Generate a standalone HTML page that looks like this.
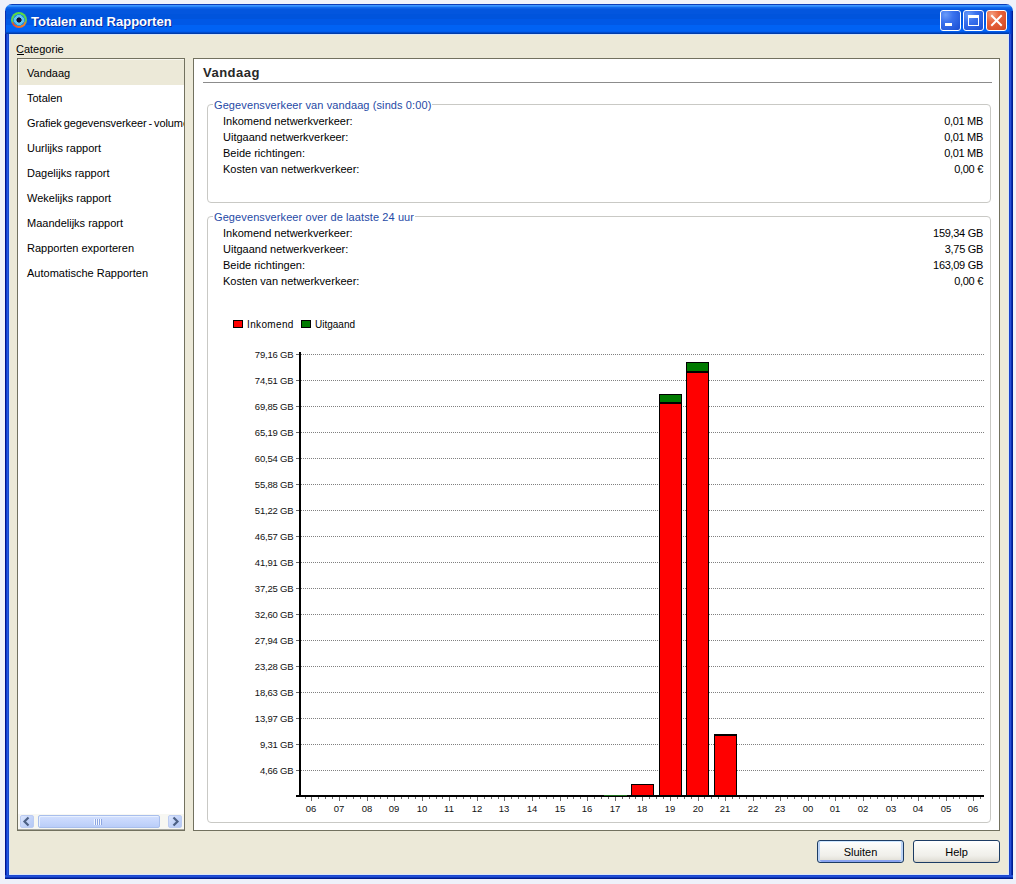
<!DOCTYPE html>
<html><head><meta charset="utf-8">
<style>
*{margin:0;padding:0;box-sizing:border-box}
html,body{width:1016px;height:884px;overflow:hidden;background:#EEF1FA;font-family:"Liberation Sans",sans-serif;font-size:11px;color:#000}
.a{position:absolute}
.t{position:absolute;white-space:nowrap;line-height:13px;height:13px}
#title{left:5px;top:4px;width:1008px;height:30px;border-radius:7px 7px 0 0;
 background:linear-gradient(to bottom,#0A3DB8 0 1px,#3D95FF 1px 2px,#2A86F8 2px 3px,#1068EC 3px 4px,#0A5EE6 4px 5px,#0356DE 5px 10px,#0054DC 10px 15px,#0058E6 15px 21px,#0062F4 21px 27px,#005CEE 27px 28px,#004CCC 28px 29px,#003CAA 29px 30px)}
#lbord{left:5px;top:34px;width:4px;height:845px;background:linear-gradient(to right,#00138C 0 1px,#0B3BD0 1px 2px,#2659E0 2px 3px,#1847C8 3px 4px)}
#rbord{left:1009px;top:34px;width:4px;height:845px;background:linear-gradient(to right,#1A40C8 0 1px,#2A50D8 1px 2px,#0A30B0 2px 3px,#001A90 3px 4px)}
#bbord{left:5px;top:875px;width:1008px;height:4px;background:linear-gradient(to bottom,#1C48D0 0 1px,#2450D8 1px 2px,#0A38B8 2px 3px,#001A8C 3px 4px)}
#client{left:9px;top:34px;width:1000px;height:841px;background:#ECE9D8;border:1px solid #D8E6F8}
.tbtn{position:absolute;top:10px;width:21px;height:21px;border:1px solid #fff;border-radius:3px;
 background:radial-gradient(circle at 25% 20%,#6A9CF8 0,#3B72EE 35%,#2358DA 80%,#1E4FD0 100%)}
.tbtn.cl{background:radial-gradient(circle at 25% 20%,#F4A080 0,#E8643C 35%,#D8502A 80%,#C8401E 100%)}
.lb{background:#fff;border:1px solid #72715F}
.item{position:absolute;left:9px;white-space:nowrap;line-height:13px}
.gb{position:absolute;border:1px solid #C9C9C5;border-radius:4px}
.gt{position:absolute;background:#fff;color:#1F4AA6;white-space:nowrap;line-height:13px;padding:0 1px;letter-spacing:0.1px}
.grid{position:absolute;left:301px;width:683px;height:1px;background:repeating-linear-gradient(to right,#7a7a7a 0 1px,transparent 1px 2px)}
.yl{position:absolute;font-size:9.5px;letter-spacing:-0.2px;line-height:11px;width:60px;text-align:right;left:233.4px;white-space:nowrap;color:#111}
.xl{position:absolute;font-size:9.5px;line-height:11px;width:20px;text-align:center;white-space:nowrap;color:#111;top:803px}
.btn{position:absolute;top:840px;width:87px;height:23px;border:1px solid #1C3C64;border-radius:3px;
 background:linear-gradient(to bottom,#FFFFFF 0%,#F8F8F4 30%,#F0EFEA 70%,#E4E2DA 90%,#D6D2C6 100%);text-align:center;line-height:23px}
.btn.def{box-shadow:inset 0 1px 0 #CEE7FF,inset 2px 0 0 #BCD4F6,inset -2px 0 0 #BCD4F6,inset 0 -2px 0 #8AA4F0}
</style></head><body>
<div id="title" class="a"></div>
<div class="a" style="left:5px;top:11px;width:1px;height:23px;background:#0A2FB0"></div>
<div class="a" style="left:1009px;top:11px;width:4px;height:23px;background:linear-gradient(to right,#0A50E8 0 1px,#0444D8 1px 2px,#0536C0 2px 3px,#001C98 3px 4px)"></div>
<div id="lbord" class="a"></div>
<div id="rbord" class="a"></div>
<div id="bbord" class="a"></div>
<div id="client" class="a"></div>
<div class="a" style="left:11px;top:12px;width:16px;height:16px;border-radius:50%;background:radial-gradient(circle,#0A1030 0 2.2px,#3A5A90 2.2px 2.8px,#5CC6F2 2.8px 4.8px,#2A90D8 4.8px 5.8px,transparent 5.8px),conic-gradient(#58DC44 0deg,#58D050 90deg,#E88030 125deg,#EE6A2A 185deg,#E04A30 235deg,#60D050 262deg,#58DC44 360deg)"></div>
<div class="tbtn" style="left:940px"><div class="a" style="left:4px;top:12px;width:7px;height:3px;background:#fff"></div></div>
<div class="tbtn" style="left:963px"><div class="a" style="left:4px;top:4px;width:11px;height:11px;border:1px solid #fff;border-top-width:3px"></div></div>
<div class="tbtn cl" style="left:986px"><svg class="a" style="left:0;top:0" width="19" height="19"><path d="M5 5 L14 14 M14 5 L5 14" stroke="#fff" stroke-width="2" stroke-linecap="square"/></svg></div>
<div class="t" style="left:31px;top:14px;font-size:13px;font-weight:bold;color:#fff;line-height:16px;height:16px;text-shadow:1px 1px 0 #0A2A9C">Totalen and Rapporten</div>

<!-- Categorie -->
<div class="t" style="left:16px;top:43px">Categorie</div>
<div class="a" style="left:17px;top:54px;width:7px;height:1px;background:#000"></div>

<!-- listbox -->
<div class="a lb" style="left:17px;top:58px;width:168px;height:773px">
</div>

<div class="a" style="left:18px;top:59px;width:166px;height:26px;background:#ECE9D8;border-top:1px solid #F8F7F0;border-left:1px solid #F8F7F0"></div>
<div class="a" style="left:18px;top:59px;width:166px;height:754px;overflow:hidden">
<div class="item" style="top:8px">Vandaag</div>
<div class="item" style="top:33px">Totalen</div>
<div class="item" style="top:58px;letter-spacing:-0.1px;word-spacing:-1px">Grafiek gegevensverkeer - volume</div>
<div class="item" style="top:83px">Uurlijks rapport</div>
<div class="item" style="top:108px">Dagelijks rapport</div>
<div class="item" style="top:133px">Wekelijks rapport</div>
<div class="item" style="top:158px">Maandelijks rapport</div>
<div class="item" style="top:183px">Rapporten exporteren</div>
<div class="item" style="top:208px">Automatische Rapporten</div>
</div>
<!-- scrollbar -->
<div class="a" style="left:18px;top:813px;width:166px;height:17px;background:#F7F7F2;border-top:1px solid #FFFFFF"></div>
<div class="a" style="left:18px;top:829px;width:166px;height:1px;background:#A8A8A0"></div>
<div class="a" style="left:20px;top:815px;width:14px;height:13px;border-radius:2px;background:linear-gradient(135deg,#DCE6FD 0%,#C4D4F9 50%,#B4C8F4 100%);border:1px solid #BCCCF2"></div>
<div class="a" style="left:168px;top:815px;width:14px;height:13px;border-radius:2px;background:linear-gradient(135deg,#DCE6FD 0%,#C4D4F9 50%,#B4C8F4 100%);border:1px solid #BCCCF2"></div>
<div class="a" style="left:38px;top:815px;width:122px;height:13px;border-radius:2px;background:linear-gradient(to bottom,#D2E0FE 0%,#C6D6FC 50%,#BACDF8 100%);border:1px solid #A8BEEC;box-shadow:inset 1px 1px 0 #E8F0FF"></div>
<svg class="a" style="left:0;top:800px" width="200" height="40">
<path d="M28.5 17.5 L24.5 21.5 L28.5 25.5" fill="none" stroke="#4D6185" stroke-width="2.2"/>
<path d="M173.5 17.5 L177.5 21.5 L173.5 25.5" fill="none" stroke="#4D6185" stroke-width="2.2"/>
<g shape-rendering="crispEdges">
<rect x="94" y="19" width="1" height="6" fill="#F4F8FF"/><rect x="95" y="19" width="1" height="6" fill="#8DA6E2"/>
<rect x="96" y="19" width="1" height="6" fill="#F4F8FF"/><rect x="97" y="19" width="1" height="6" fill="#8DA6E2"/>
<rect x="98" y="19" width="1" height="6" fill="#F4F8FF"/><rect x="99" y="19" width="1" height="6" fill="#8DA6E2"/>
<rect x="100" y="19" width="1" height="6" fill="#F4F8FF"/><rect x="101" y="19" width="1" height="6" fill="#8DA6E2"/>
</g></svg>
<!-- right panel -->
<div class="a lb" style="left:193px;top:58px;width:807px;height:773px"></div>


<div class="t" style="left:203px;top:65px;font-size:13px;font-weight:bold;color:#282828;letter-spacing:0.5px;line-height:16px;height:16px">Vandaag</div>
<div class="a" style="left:203px;top:82px;width:789px;height:1px;background:#8C8C8C"></div>
<div class="gb" style="left:207px;top:104px;width:784px;height:99px"></div>
<div class="gt" style="left:213px;top:99px">Gegevensverkeer van vandaag (sinds 0:00)</div>
<div class="t" style="left:223px;top:115px">Inkomend netwerkverkeer:</div>
<div class="t" style="left:883px;width:100px;text-align:right;letter-spacing:-0.3px;top:115px">0,01 MB</div>
<div class="t" style="left:223px;top:131px">Uitgaand netwerkverkeer:</div>
<div class="t" style="left:883px;width:100px;text-align:right;letter-spacing:-0.3px;top:131px">0,01 MB</div>
<div class="t" style="left:223px;top:147px">Beide richtingen:</div>
<div class="t" style="left:883px;width:100px;text-align:right;letter-spacing:-0.3px;top:147px">0,01 MB</div>
<div class="t" style="left:223px;top:163px">Kosten van netwerkverkeer:</div>
<div class="t" style="left:883px;width:100px;text-align:right;letter-spacing:-0.3px;top:163px">0,00 &euro;</div>
<div class="gb" style="left:207px;top:216px;width:784px;height:607px"></div>
<div class="gt" style="left:213px;top:211px">Gegevensverkeer over de laatste 24 uur</div>
<div class="t" style="left:223px;top:227px">Inkomend netwerkverkeer:</div>
<div class="t" style="left:883px;width:100px;text-align:right;letter-spacing:-0.3px;top:227px">159,34 GB</div>
<div class="t" style="left:223px;top:243px">Uitgaand netwerkverkeer:</div>
<div class="t" style="left:883px;width:100px;text-align:right;letter-spacing:-0.3px;top:243px">3,75 GB</div>
<div class="t" style="left:223px;top:259px">Beide richtingen:</div>
<div class="t" style="left:883px;width:100px;text-align:right;letter-spacing:-0.3px;top:259px">163,09 GB</div>
<div class="t" style="left:223px;top:275px">Kosten van netwerkverkeer:</div>
<div class="t" style="left:883px;width:100px;text-align:right;letter-spacing:-0.3px;top:275px">0,00 &euro;</div>
<svg class="a" style="left:0;top:0" width="1016" height="884" shape-rendering="crispEdges">

<line x1="301" y1="354.5" x2="984" y2="354.5" stroke="#808080" stroke-width="1" stroke-dasharray="1 1"/>
<rect x="296" y="354" width="3" height="1" fill="#6A6A6A"/>
<line x1="301" y1="380.5" x2="984" y2="380.5" stroke="#808080" stroke-width="1" stroke-dasharray="1 1"/>
<rect x="296" y="380" width="3" height="1" fill="#6A6A6A"/>
<line x1="301" y1="406.5" x2="984" y2="406.5" stroke="#808080" stroke-width="1" stroke-dasharray="1 1"/>
<rect x="296" y="406" width="3" height="1" fill="#6A6A6A"/>
<line x1="301" y1="432.5" x2="984" y2="432.5" stroke="#808080" stroke-width="1" stroke-dasharray="1 1"/>
<rect x="296" y="432" width="3" height="1" fill="#6A6A6A"/>
<line x1="301" y1="458.5" x2="984" y2="458.5" stroke="#808080" stroke-width="1" stroke-dasharray="1 1"/>
<rect x="296" y="458" width="3" height="1" fill="#6A6A6A"/>
<line x1="301" y1="484.5" x2="984" y2="484.5" stroke="#808080" stroke-width="1" stroke-dasharray="1 1"/>
<rect x="296" y="484" width="3" height="1" fill="#6A6A6A"/>
<line x1="301" y1="510.5" x2="984" y2="510.5" stroke="#808080" stroke-width="1" stroke-dasharray="1 1"/>
<rect x="296" y="510" width="3" height="1" fill="#6A6A6A"/>
<line x1="301" y1="536.5" x2="984" y2="536.5" stroke="#808080" stroke-width="1" stroke-dasharray="1 1"/>
<rect x="296" y="536" width="3" height="1" fill="#6A6A6A"/>
<line x1="301" y1="562.5" x2="984" y2="562.5" stroke="#808080" stroke-width="1" stroke-dasharray="1 1"/>
<rect x="296" y="562" width="3" height="1" fill="#6A6A6A"/>
<line x1="301" y1="588.5" x2="984" y2="588.5" stroke="#808080" stroke-width="1" stroke-dasharray="1 1"/>
<rect x="296" y="588" width="3" height="1" fill="#6A6A6A"/>
<line x1="301" y1="614.5" x2="984" y2="614.5" stroke="#808080" stroke-width="1" stroke-dasharray="1 1"/>
<rect x="296" y="614" width="3" height="1" fill="#6A6A6A"/>
<line x1="301" y1="640.5" x2="984" y2="640.5" stroke="#808080" stroke-width="1" stroke-dasharray="1 1"/>
<rect x="296" y="640" width="3" height="1" fill="#6A6A6A"/>
<line x1="301" y1="666.5" x2="984" y2="666.5" stroke="#808080" stroke-width="1" stroke-dasharray="1 1"/>
<rect x="296" y="666" width="3" height="1" fill="#6A6A6A"/>
<line x1="301" y1="692.5" x2="984" y2="692.5" stroke="#808080" stroke-width="1" stroke-dasharray="1 1"/>
<rect x="296" y="692" width="3" height="1" fill="#6A6A6A"/>
<line x1="301" y1="718.5" x2="984" y2="718.5" stroke="#808080" stroke-width="1" stroke-dasharray="1 1"/>
<rect x="296" y="718" width="3" height="1" fill="#6A6A6A"/>
<line x1="301" y1="744.5" x2="984" y2="744.5" stroke="#808080" stroke-width="1" stroke-dasharray="1 1"/>
<rect x="296" y="744" width="3" height="1" fill="#6A6A6A"/>
<line x1="301" y1="770.5" x2="984" y2="770.5" stroke="#808080" stroke-width="1" stroke-dasharray="1 1"/>
<rect x="296" y="770" width="3" height="1" fill="#6A6A6A"/>
<rect x="299" y="352" width="2" height="445" fill="#000"/>
<rect x="296" y="795" width="688" height="2" fill="#000"/>
<rect x="305" y="797" width="1" height="2" fill="#6A6A6A"/>
<rect x="311" y="797" width="1" height="4" fill="#6A6A6A"/>
<rect x="318" y="797" width="1" height="2" fill="#6A6A6A"/>
<rect x="325" y="797" width="1" height="2" fill="#6A6A6A"/>
<rect x="332" y="797" width="1" height="2" fill="#6A6A6A"/>
<rect x="339" y="797" width="1" height="4" fill="#6A6A6A"/>
<rect x="346" y="797" width="1" height="2" fill="#6A6A6A"/>
<rect x="353" y="797" width="1" height="2" fill="#6A6A6A"/>
<rect x="360" y="797" width="1" height="2" fill="#6A6A6A"/>
<rect x="367" y="797" width="1" height="4" fill="#6A6A6A"/>
<rect x="374" y="797" width="1" height="2" fill="#6A6A6A"/>
<rect x="380" y="797" width="1" height="2" fill="#6A6A6A"/>
<rect x="387" y="797" width="1" height="2" fill="#6A6A6A"/>
<rect x="394" y="797" width="1" height="4" fill="#6A6A6A"/>
<rect x="401" y="797" width="1" height="2" fill="#6A6A6A"/>
<rect x="408" y="797" width="1" height="2" fill="#6A6A6A"/>
<rect x="415" y="797" width="1" height="2" fill="#6A6A6A"/>
<rect x="422" y="797" width="1" height="4" fill="#6A6A6A"/>
<rect x="429" y="797" width="1" height="2" fill="#6A6A6A"/>
<rect x="436" y="797" width="1" height="2" fill="#6A6A6A"/>
<rect x="442" y="797" width="1" height="2" fill="#6A6A6A"/>
<rect x="449" y="797" width="1" height="4" fill="#6A6A6A"/>
<rect x="456" y="797" width="1" height="2" fill="#6A6A6A"/>
<rect x="463" y="797" width="1" height="2" fill="#6A6A6A"/>
<rect x="470" y="797" width="1" height="2" fill="#6A6A6A"/>
<rect x="477" y="797" width="1" height="4" fill="#6A6A6A"/>
<rect x="484" y="797" width="1" height="2" fill="#6A6A6A"/>
<rect x="491" y="797" width="1" height="2" fill="#6A6A6A"/>
<rect x="498" y="797" width="1" height="2" fill="#6A6A6A"/>
<rect x="504" y="797" width="1" height="4" fill="#6A6A6A"/>
<rect x="511" y="797" width="1" height="2" fill="#6A6A6A"/>
<rect x="518" y="797" width="1" height="2" fill="#6A6A6A"/>
<rect x="525" y="797" width="1" height="2" fill="#6A6A6A"/>
<rect x="532" y="797" width="1" height="4" fill="#6A6A6A"/>
<rect x="539" y="797" width="1" height="2" fill="#6A6A6A"/>
<rect x="546" y="797" width="1" height="2" fill="#6A6A6A"/>
<rect x="553" y="797" width="1" height="2" fill="#6A6A6A"/>
<rect x="560" y="797" width="1" height="4" fill="#6A6A6A"/>
<rect x="567" y="797" width="1" height="2" fill="#6A6A6A"/>
<rect x="573" y="797" width="1" height="2" fill="#6A6A6A"/>
<rect x="580" y="797" width="1" height="2" fill="#6A6A6A"/>
<rect x="587" y="797" width="1" height="4" fill="#6A6A6A"/>
<rect x="594" y="797" width="1" height="2" fill="#6A6A6A"/>
<rect x="601" y="797" width="1" height="2" fill="#6A6A6A"/>
<rect x="608" y="797" width="1" height="2" fill="#6A6A6A"/>
<rect x="615" y="797" width="1" height="4" fill="#6A6A6A"/>
<rect x="622" y="797" width="1" height="2" fill="#6A6A6A"/>
<rect x="629" y="797" width="1" height="2" fill="#6A6A6A"/>
<rect x="635" y="797" width="1" height="2" fill="#6A6A6A"/>
<rect x="642" y="797" width="1" height="4" fill="#6A6A6A"/>
<rect x="649" y="797" width="1" height="2" fill="#6A6A6A"/>
<rect x="656" y="797" width="1" height="2" fill="#6A6A6A"/>
<rect x="663" y="797" width="1" height="2" fill="#6A6A6A"/>
<rect x="670" y="797" width="1" height="4" fill="#6A6A6A"/>
<rect x="677" y="797" width="1" height="2" fill="#6A6A6A"/>
<rect x="684" y="797" width="1" height="2" fill="#6A6A6A"/>
<rect x="691" y="797" width="1" height="2" fill="#6A6A6A"/>
<rect x="698" y="797" width="1" height="4" fill="#6A6A6A"/>
<rect x="704" y="797" width="1" height="2" fill="#6A6A6A"/>
<rect x="711" y="797" width="1" height="2" fill="#6A6A6A"/>
<rect x="718" y="797" width="1" height="2" fill="#6A6A6A"/>
<rect x="725" y="797" width="1" height="4" fill="#6A6A6A"/>
<rect x="732" y="797" width="1" height="2" fill="#6A6A6A"/>
<rect x="739" y="797" width="1" height="2" fill="#6A6A6A"/>
<rect x="746" y="797" width="1" height="2" fill="#6A6A6A"/>
<rect x="753" y="797" width="1" height="4" fill="#6A6A6A"/>
<rect x="760" y="797" width="1" height="2" fill="#6A6A6A"/>
<rect x="766" y="797" width="1" height="2" fill="#6A6A6A"/>
<rect x="773" y="797" width="1" height="2" fill="#6A6A6A"/>
<rect x="780" y="797" width="1" height="4" fill="#6A6A6A"/>
<rect x="787" y="797" width="1" height="2" fill="#6A6A6A"/>
<rect x="794" y="797" width="1" height="2" fill="#6A6A6A"/>
<rect x="801" y="797" width="1" height="2" fill="#6A6A6A"/>
<rect x="808" y="797" width="1" height="4" fill="#6A6A6A"/>
<rect x="815" y="797" width="1" height="2" fill="#6A6A6A"/>
<rect x="822" y="797" width="1" height="2" fill="#6A6A6A"/>
<rect x="829" y="797" width="1" height="2" fill="#6A6A6A"/>
<rect x="835" y="797" width="1" height="4" fill="#6A6A6A"/>
<rect x="842" y="797" width="1" height="2" fill="#6A6A6A"/>
<rect x="849" y="797" width="1" height="2" fill="#6A6A6A"/>
<rect x="856" y="797" width="1" height="2" fill="#6A6A6A"/>
<rect x="863" y="797" width="1" height="4" fill="#6A6A6A"/>
<rect x="870" y="797" width="1" height="2" fill="#6A6A6A"/>
<rect x="877" y="797" width="1" height="2" fill="#6A6A6A"/>
<rect x="884" y="797" width="1" height="2" fill="#6A6A6A"/>
<rect x="891" y="797" width="1" height="4" fill="#6A6A6A"/>
<rect x="897" y="797" width="1" height="2" fill="#6A6A6A"/>
<rect x="904" y="797" width="1" height="2" fill="#6A6A6A"/>
<rect x="911" y="797" width="1" height="2" fill="#6A6A6A"/>
<rect x="918" y="797" width="1" height="4" fill="#6A6A6A"/>
<rect x="925" y="797" width="1" height="2" fill="#6A6A6A"/>
<rect x="932" y="797" width="1" height="2" fill="#6A6A6A"/>
<rect x="939" y="797" width="1" height="2" fill="#6A6A6A"/>
<rect x="946" y="797" width="1" height="4" fill="#6A6A6A"/>
<rect x="953" y="797" width="1" height="2" fill="#6A6A6A"/>
<rect x="959" y="797" width="1" height="2" fill="#6A6A6A"/>
<rect x="966" y="797" width="1" height="2" fill="#6A6A6A"/>
<rect x="973" y="797" width="1" height="4" fill="#6A6A6A"/>
<rect x="980" y="797" width="1" height="2" fill="#6A6A6A"/>
<rect x="631" y="784" width="23" height="12" fill="#000"/><rect x="632" y="785" width="21" height="10" fill="#FF0000"/>
<rect x="659" y="394" width="23" height="402" fill="#000"/>
<rect x="660" y="395" width="21" height="7" fill="#007A00"/>
<rect x="660" y="404" width="21" height="391" fill="#FF0000"/>
<rect x="686" y="362" width="23" height="434" fill="#000"/>
<rect x="687" y="363" width="21" height="8" fill="#007A00"/>
<rect x="687" y="373" width="21" height="422" fill="#FF0000"/>
<rect x="714" y="734" width="23" height="62" fill="#000"/><rect x="715" y="736" width="21" height="59" fill="#FF0000"/>
<rect x="604" y="795" width="23" height="1" fill="#1A6A1A"/>
</svg>
<div class="a" style="left:233px;top:320px;width:10px;height:8px;background:#FF0000;border:1px solid #000"></div>
<div class="t" style="left:247px;top:318px;font-size:10px;letter-spacing:0.35px">Inkomend</div>
<div class="a" style="left:301px;top:320px;width:10px;height:8px;background:#007A00;border:1px solid #000"></div>
<div class="t" style="left:315px;top:318px;font-size:10px">Uitgaand</div>
<div class="yl" style="top:349px">79,16 GB</div>
<div class="yl" style="top:375px">74,51 GB</div>
<div class="yl" style="top:401px">69,85 GB</div>
<div class="yl" style="top:427px">65,19 GB</div>
<div class="yl" style="top:453px">60,54 GB</div>
<div class="yl" style="top:479px">55,88 GB</div>
<div class="yl" style="top:505px">51,22 GB</div>
<div class="yl" style="top:531px">46,57 GB</div>
<div class="yl" style="top:557px">41,91 GB</div>
<div class="yl" style="top:583px">37,25 GB</div>
<div class="yl" style="top:609px">32,60 GB</div>
<div class="yl" style="top:635px">27,94 GB</div>
<div class="yl" style="top:661px">23,28 GB</div>
<div class="yl" style="top:687px">18,63 GB</div>
<div class="yl" style="top:713px">13,97 GB</div>
<div class="yl" style="top:739px">9,31 GB</div>
<div class="yl" style="top:765px">4,66 GB</div>
<div class="xl" style="left:301.0px">06</div>
<div class="xl" style="left:329.0px">07</div>
<div class="xl" style="left:357.0px">08</div>
<div class="xl" style="left:384.0px">09</div>
<div class="xl" style="left:412.0px">10</div>
<div class="xl" style="left:439.0px">11</div>
<div class="xl" style="left:467.0px">12</div>
<div class="xl" style="left:494.0px">13</div>
<div class="xl" style="left:522.0px">14</div>
<div class="xl" style="left:550.0px">15</div>
<div class="xl" style="left:577.0px">16</div>
<div class="xl" style="left:605.0px">17</div>
<div class="xl" style="left:632.0px">18</div>
<div class="xl" style="left:660.0px">19</div>
<div class="xl" style="left:688.0px">20</div>
<div class="xl" style="left:715.0px">21</div>
<div class="xl" style="left:743.0px">22</div>
<div class="xl" style="left:770.0px">23</div>
<div class="xl" style="left:798.0px">00</div>
<div class="xl" style="left:825.0px">01</div>
<div class="xl" style="left:853.0px">02</div>
<div class="xl" style="left:881.0px">03</div>
<div class="xl" style="left:908.0px">04</div>
<div class="xl" style="left:936.0px">05</div>
<div class="xl" style="left:963.0px">06</div>
<!-- buttons -->
<div class="btn def" style="left:817px">Sluiten</div>
<div class="btn" style="left:913px">Help</div>
</body></html>
